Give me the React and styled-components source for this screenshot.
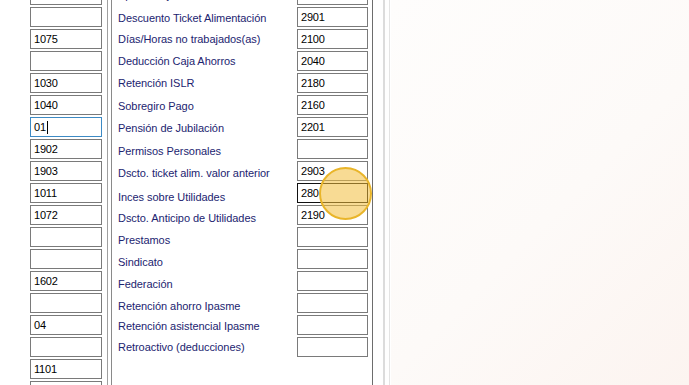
import styled, { createGlobalStyle } from "styled-components";

const GlobalStyle = createGlobalStyle`
  html, body {
    margin: 0;
    padding: 0;
    overflow: hidden;
  }
  body {
    font-family: "Liberation Sans", Arial, sans-serif;
  }
`;

const leftCodes = [
  "", "", "1075", "", "1030", "1040", "01", "1902", "1903", "1011", "1072",
  "", "", "1602", "", "04", "", "1101", "",
];

// [label, code, label nudge in px]
const rightRows = [
  ["Aporte Caja de Ahorros", "", 0],
  ["Descuento Ticket Alimentación", "2901", 1],
  ["Días/Horas no trabajados(as)", "2100", 0],
  ["Deducción Caja Ahorros", "2040", 0],
  ["Retención ISLR", "2180", 0],
  ["Sobregiro Pago", "2160", 1],
  ["Pensión de Jubilación", "2201", 1],
  ["Permisos Personales", "", 2],
  ["Dscto. ticket alim. valor anterior", "2903", 2],
  ["Inces sobre Utilidades", "280", 4],
  ["Dscto. Anticipo de Utilidades", "2190", 3],
  ["Prestamos", "", 3],
  ["Sindicato", "", 3],
  ["Federación", "", 3],
  ["Retención ahorro Ipasme", "", 3],
  ["Retención asistencial Ipasme", "", 1],
  ["Retroactivo (deducciones)", "", 0],
];

function App() {
  return (
    <>
      <GlobalStyle />
      <Screen>
        <FormPanel>
          <CodeColumn>
            {leftCodes.map((code, i) => (
              <Row key={i}>
                <Field focused={i === 6}>
                  {code}
                  {i === 6 && <Caret />}
                </Field>
              </Row>
            ))}
          </CodeColumn>
          <Divider />
          <ConceptColumn>
            {rightRows.map(([label, code, nudge], i) => (
              <ConceptRow key={i}>
                <Label nudge={nudge}>{label}</Label>
                <Field active={i === 9}>
                  {code}
                  {i === 9 && <Caret />}
                </Field>
              </ConceptRow>
            ))}
          </ConceptColumn>
        </FormPanel>
        <Gutter>
          <GutterLine />
          <GutterLine light />
        </Gutter>
        <Backdrop />
        <ClickMark />
      </Screen>
    </>
  );
}

const Screen = styled.div`
  position: relative;
  display: flex;
  width: 689px;
  height: 385px;
  overflow: hidden;
  background: #ffffff;
`;

const FormPanel = styled.div`
  display: flex;
  width: 373px;
  height: 100%;
  box-sizing: border-box;
  border-right: 1px solid #6d6d6d;
  background: #ffffff;
`;

const CodeColumn = styled.div`
  display: flex;
  flex-direction: column;
  width: 107px;
  box-sizing: border-box;
  padding-left: 30px;
  margin-top: -16px;
`;

const Row = styled.div`
  display: flex;
  align-items: center;
  height: 22px;
  flex-shrink: 0;
`;

const Field = styled.div`
  display: flex;
  align-items: center;
  box-sizing: border-box;
  width: ${(p) => (p.active !== undefined ? "71px" : "72px")};
  height: 20px;
  padding-left: 3px;
  border: 1px solid
    ${(p) => (p.focused ? "#3d8ac4" : p.active ? "#111111" : "#7a7a7a")};
  background: #ffffff;
  color: #000000;
  font-size: 11px;
  letter-spacing: -0.2px;
`;

const Caret = styled.span`
  display: inline-block;
  width: 1px;
  height: 13px;
  margin-left: 1px;
  background: #000000;
`;

const Divider = styled.div`
  width: 5px;
  height: 100%;
  box-sizing: border-box;
  border-left: 1px solid #a0a0a0;
  border-right: 1px solid #8a8a8a;
`;

const ConceptColumn = styled.div`
  display: flex;
  flex-direction: column;
  flex: 1;
  margin-top: -16px;
`;

const ConceptRow = styled(Row)`
  display: grid;
  grid-template-columns: 1fr 71px;
  padding: 0 4px 0 6px;
`;

const Label = styled.span`
  padding-top: ${(p) => p.nudge * 2}px;
  color: #1c2470;
  font-size: 11px;
  letter-spacing: -0.05px;
  white-space: nowrap;
  overflow: hidden;
`;

const Gutter = styled.div`
  display: flex;
  gap: 4px;
  width: 18px;
  height: 100%;
  padding-left: 10px;
  box-sizing: border-box;
  background: #ffffff;
`;

const GutterLine = styled.div`
  width: ${(p) => (p.light ? "1px" : "2px")};
  height: 100%;
  background: ${(p) => (p.light ? "#e4e4e4" : "#dcdcdc")};
`;

const Backdrop = styled.div`
  flex: 1;
  height: 100%;
  background: linear-gradient(135deg, #fefdfc 0%, #fdfaf8 55%, #fcf4f0 100%);
`;

const ClickMark = styled.div`
  position: absolute;
  left: 319px;
  top: 167px;
  width: 53px;
  height: 53px;
  box-sizing: border-box;
  border-radius: 50%;
  border: 2px solid #e9b52a;
  background: rgba(243, 190, 60, 0.55);
  pointer-events: none;
`;

export default App;
